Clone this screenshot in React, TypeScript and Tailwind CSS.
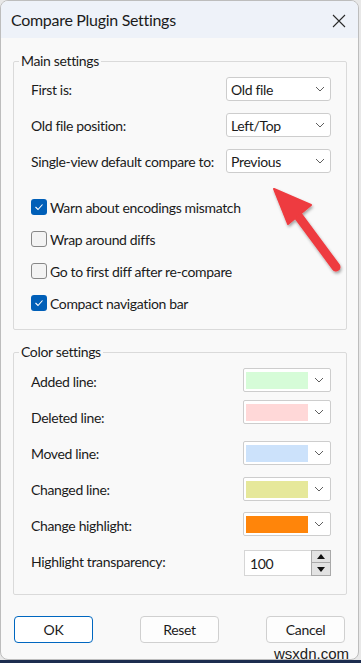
import React from "react";

const font = { fontFamily: 'Lato, "Noto Sans", sans-serif', letterSpacing: "-0.35px" };

function Chevron() {
  return (
    <svg width="10" height="6" viewBox="0 0 10 6" className="shrink-0">
      <path d="M1 1 L5 5 L9 1" fill="none" stroke="#5f5f5f" strokeWidth="1" />
    </svg>
  );
}

function Select({ value }: { value: string }) {
  return (
    <div className="w-[105px] h-[24px] shrink-0 bg-white border border-[#cdcdcd] rounded-[3px] flex items-center justify-between pl-[4px] pr-[5px] text-[14px] text-[#1b1b1b]">
      <span>{value}</span>
      <Chevron />
    </div>
  );
}

function Check({ checked, label }: { checked: boolean; label: string }) {
  return (
    <div className="h-[32px] flex items-center">
      {checked ? (
        <div className="w-[16px] h-[16px] rounded-[3px] bg-[#005fb8] flex items-center justify-center">
          <svg width="10" height="8" viewBox="0 0 10 8">
            <path d="M1.5 4 L4 6.5 L8.5 1.5" fill="none" stroke="white" strokeWidth="1.1" />
          </svg>
        </div>
      ) : (
        <div className="w-[16px] h-[16px] rounded-[3px] bg-[#f3f3f3] border border-[#878787]" />
      )}
      <span className="ml-[3px] text-[14px] text-[#1b1b1b]">{label}</span>
    </div>
  );
}

function ColorBox({ color, cls = "" }: { color: string; cls?: string }) {
  return (
    <div className={"w-[88px] h-[24px] shrink-0 bg-white border border-[#cdcdcd] rounded-[2px] flex items-center pl-[2px] pr-[6px] justify-between " + cls}>
      <div className="w-[62px] h-[17px]" style={{ backgroundColor: color }} />
      <Chevron />
    </div>
  );
}

function Row({ label, children }: { label: string; children: React.ReactNode }) {
  return (
    <div className="h-[36px] flex items-center justify-between text-[14px] text-[#1b1b1b] whitespace-nowrap">
      <span>{label}</span>
      {children}
    </div>
  );
}

export default function App() {
  return (
    <div className="w-[361px] h-[663px] bg-[#e8e8e8] relative overflow-hidden" style={font}>
      <div className="w-[359px] h-[660px] bg-[#f9f9f9] border border-[#bdbdbd] rounded-[8px] overflow-hidden flex flex-col">
        {/* Title bar */}
        <div className="h-[37px] bg-[#eef2f9] flex items-center justify-between pl-[10px] pr-[12px] shrink-0">
          <span className="text-[16px] text-[#1b1b1b]" style={{ letterSpacing: "-0.3px" }}>Compare Plugin Settings</span>
          <svg width="14" height="14" viewBox="0 0 14 14" className="mt-[2px]">
            <path d="M1 1 L13 13 M13 1 L1 13" stroke="#2b2b2b" strokeWidth="1.1" />
          </svg>
        </div>

        <div className="pl-[12px] pr-[11px] pt-[13px]">
          <fieldset className="min-w-0 border border-[#dadada] rounded-[2px] pl-[17px] pr-[15px] pb-[10px]">
            <legend className="-ml-[12px] px-[2px] text-[14px] leading-[20px] text-[#1b1b1b]">Main settings</legend>
            <div className="flex flex-col">
              <Row label="First is:">
                <Select value="Old file" />
              </Row>
              <Row label="Old file position:">
                <Select value="Left/Top" />
              </Row>
              <Row label="Single-view default compare to:">
                <Select value="Previous" />
              </Row>
            </div>
            <div className="mt-[12px] flex flex-col">
              <Check checked label="Warn about encodings mismatch" />
              <Check checked={false} label="Wrap around diffs" />
              <Check checked={false} label="Go to first diff after re-compare" />
              <Check checked label="Compact navigation bar" />
            </div>
          </fieldset>

          <fieldset className="min-w-0 mt-[12px] border border-[#dadada] rounded-[2px] pl-[17px] pr-[15px] pb-[15px]">
            <legend className="-ml-[12px] px-[2px] text-[14px] leading-[20px] text-[#1b1b1b]">Color settings</legend>
            <div className="pt-[1px] flex flex-col">
              <Row label="Added line:">
                <ColorBox color="#d6fcd8" cls="-mt-[2px]" />
              </Row>
              <Row label="Deleted line:">
                <ColorBox color="#ffd8d8" cls="-mt-[10px]" />
              </Row>
              <Row label="Moved line:">
                <ColorBox color="#cce2fb" />
              </Row>
              <Row label="Changed line:">
                <ColorBox color="#e6e89a" />
              </Row>
              <Row label="Change highlight:">
                <ColorBox color="#ff850a" cls="-mt-[2px]" />
              </Row>
              <Row label="Highlight transparency:">
                <div className="flex h-[26px] mt-[4px] shrink-0">
                  <div className="w-[67px] h-[26px] bg-white border border-[#d6d6d6] border-r-0 flex items-center pl-[5px] text-[14px]">100</div>
                  <div className="w-[20px] flex flex-col">
                    <div className="h-[13px] bg-[#e3e3e3] border border-[#a9a9a9] flex items-center justify-center">
                      <svg width="8" height="5" viewBox="0 0 8 5"><path d="M0 5 L4 0 L8 5 Z" fill="#111" /></svg>
                    </div>
                    <div className="h-[13px] bg-[#e3e3e3] border border-t-0 border-[#a9a9a9] flex items-center justify-center">
                      <svg width="8" height="5" viewBox="0 0 8 5"><path d="M0 0 L4 5 L8 0 Z" fill="#111" /></svg>
                    </div>
                  </div>
                </div>
              </Row>
            </div>
          </fieldset>

          <div className="mt-[21px] flex justify-between pl-[1px] pr-[2px]">
            <button className="w-[79px] h-[27px] bg-white border border-[#0067c0] rounded-[4px] text-[14px] text-[#1b1b1b]">OK</button>
            <button className="w-[79px] h-[27px] bg-[#fdfdfd] border border-[#d0d0d0] rounded-[4px] text-[14px] text-[#1b1b1b]">Reset</button>
            <button className="w-[79px] h-[27px] bg-[#fdfdfd] border border-[#d0d0d0] rounded-[4px] text-[14px] text-[#1b1b1b]">Cancel</button>
          </div>
        </div>
      </div>
      <div className="h-[3px] bg-[#1d2d4f]" />

      {/* watermark */}
      <div className="absolute right-[12px] bottom-[1px] text-[15px] leading-[16px] text-[#222]" style={{ fontFamily: '"Liberation Sans", Arial, sans-serif', letterSpacing: "0px" }}>
        wsxdn.com
      </div>

      {/* red arrow overlay */}
      <svg className="absolute left-0 top-0 pointer-events-none" width="361" height="663" viewBox="0 0 361 663">
        <defs>
          <filter id="sh" x="-20%" y="-20%" width="140%" height="140%">
            <feDropShadow dx="1" dy="2" stdDeviation="1.5" floodColor="#000" floodOpacity="0.35" />
          </filter>
        </defs>
        <g filter="url(#sh)">
          <line x1="296" y1="213" x2="336" y2="267" stroke="#ee3b3f" strokeWidth="9" strokeLinecap="round" />
          <path d="M274 189 L311 205 L288 224 Z" fill="#ee3b3f" stroke="#ee3b3f" strokeWidth="2" strokeLinejoin="round" />
        </g>
      </svg>
    </div>
  );
}
